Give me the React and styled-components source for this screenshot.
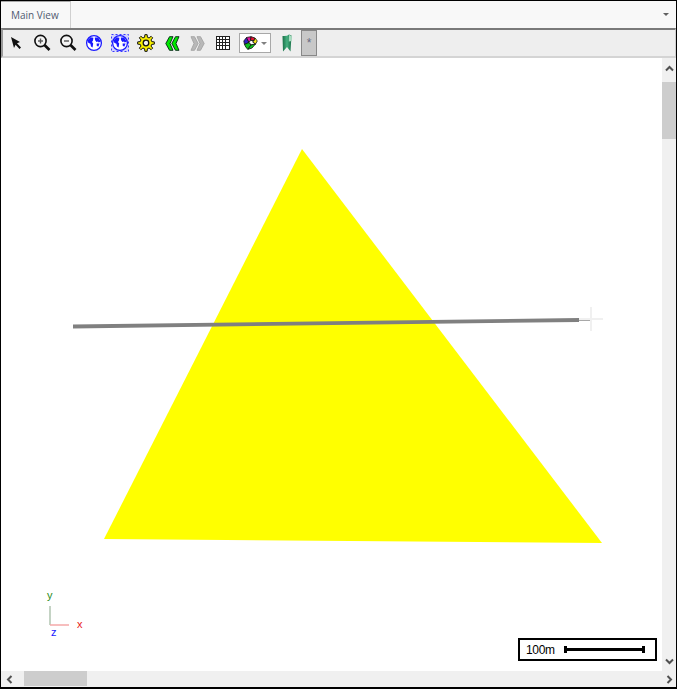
import React from "react";
import styled, { createGlobalStyle } from "styled-components";

const Global = createGlobalStyle`
  html, body { margin: 0; padding: 0; background: #fff; }
  body { font-family: "Liberation Sans", Arial, sans-serif; }
`;

const Frame = styled.div`
  box-sizing: border-box;
  width: 677px;
  height: 689px;
  border: 1px solid #000;
  border-bottom-width: 2px;
  display: flex;
  flex-direction: column;
  background: #fff;
  overflow: hidden;
`;

const TabStrip = styled.div`
  height: 27px;
  flex: none;
  background: #f8f8f8;
  display: flex;
  justify-content: space-between;
  align-items: stretch;
`;

const Tab = styled.div`
  box-sizing: border-box;
  width: 70px;
  border-right: 1px solid #d0d0d0;
  border-top: 1px solid #a8a8a8;
  background: #f8f8f8;
  color: #505a70;
  font-family: "Open Sans", sans-serif;
  font-size: 10px;
  line-height: 26px;
  padding-left: 10px;
  white-space: nowrap;
`;

const TabMenu = styled.div`
  width: 0;
  height: 0;
  margin: 12px 7px 0 0;
  border-left: 3px solid transparent;
  border-right: 3px solid transparent;
  border-top: 3px solid #606060;
`;

const Toolbar = styled.div`
  box-sizing: border-box;
  height: 30px;
  flex: none;
  background: #eeeeee;
  border-top: 2px solid #7a7a7a;
  border-left: 2px solid #9a9a9a;
  border-right: 1px solid #d0d0d0;
  border-bottom: 2px solid #d4d4d4;
  display: flex;
  align-items: center;
`;

const ToolIcon = styled.div`
  width: ${(p) => p.$w || 26}px;
  height: 26px;
  margin-left: ${(p) => p.$ml || 0}px;
  flex: none;
  display: flex;
  align-items: center;
  justify-content: center;
`;

const PaletteButton = styled.div`
  box-sizing: border-box;
  width: 32px;
  height: 20px;
  margin-left: 4px;
  background: #fff;
  border: 1px solid #a8a8a8;
  display: flex;
  align-items: center;
  gap: 3px;
  padding-left: 3px;
`;

const Caret = styled.div`
  width: 0;
  height: 0;
  border-left: 3px solid transparent;
  border-right: 3px solid transparent;
  border-top: 3px solid #808080;
`;

const Overflow = styled.div`
  box-sizing: border-box;
  width: 16px;
  height: 26px;
  margin-left: 1px;
  background: #c8c8c8;
  border: 1px solid #888;
  color: #6a6a80;
  font-size: 12px;
  text-align: center;
  line-height: 25px;
`;

const Body = styled.div`
  flex: 1;
  min-height: 0;
  display: grid;
  grid-template-columns: 1fr 14px;
  grid-template-rows: 1fr 16px;
`;

const Canvas = styled.div`
  position: relative;
  overflow: hidden;
  background: #fff;
`;

const Scene = styled.svg`
  display: block;
  position: absolute;
  inset: 0;
`;

const AxisLabel = styled.span`
  position: absolute;
  left: ${(p) => p.$x}px;
  top: ${(p) => p.$y}px;
  color: ${(p) => p.$color};
  font-size: 11px;
  line-height: 11px;
`;

const ScaleBox = styled.div`
  position: absolute;
  left: 517px;
  top: 580px;
  box-sizing: border-box;
  width: 139px;
  height: 23px;
  border: 2px solid #000;
  background: #fff;
  display: flex;
  align-items: center;
  padding-left: 6px;
  font-size: 12px;
  letter-spacing: -0.3px;
  color: #000;
`;

const ScaleBar = styled.div`
  position: relative;
  width: 81px;
  height: 3px;
  margin-left: 9px;
  background: #000;
  &::before, &::after {
    content: "";
    position: absolute;
    top: -2px;
    width: 3px;
    height: 7px;
    background: #000;
  }
  &::before { left: 0; }
  &::after { right: 0; }
`;

const VScroll = styled.div`
  background: #f0f0f0;
  display: flex;
  flex-direction: column;
  align-items: center;
`;

const HScroll = styled.div`
  background: #f0f0f0;
  display: flex;
  align-items: center;
`;

const Corner = styled.div`
  background: #f0f0f0;
`;

const Arrow = styled.div`
  flex: none;
  display: flex;
  align-items: center;
  justify-content: center;
  width: ${(p) => p.$w}px;
  height: ${(p) => p.$h}px;
`;

const VThumb = styled.div`
  width: 14px;
  height: 57px;
  margin-top: 4px;
  background: #cdcdcd;
`;

const HThumb = styled.div`
  height: 15px;
  width: 63px;
  align-self: flex-start;
  margin-left: 6px;
  background: #cdcdcd;
`;

const Spacer = styled.div`
  flex: 1;
`;

const Chev = ({ d }) => (
  <svg width="9" height="9" viewBox="0 0 9 9" fill="none">
    <path d={d} stroke="#505050" strokeWidth="2" />
  </svg>
);

const Globe = ({ box }) => (
  <svg width="18" height="18" viewBox="0 0 18 18">
    {box && <rect x="0.5" y="0.5" width="17" height="17" fill="#d0d0ff" stroke="#3a3aff" strokeDasharray="2 2" />}
    <circle cx="9" cy="9" r="7.4" fill="#fff" stroke="#1a1aff" strokeWidth="1.3" />
    <path d="M2.8 6 L5.5 3.2 L8.4 3.8 L8 6.5 L7 8 L8.2 9.5 L7.6 13.5 L6 12.5 L5.4 9.8 L3.2 8.8 Z" fill="#1a1aff" />
    <path d="M9.8 3.4 L13.2 3.6 L15.6 7.6 L13.8 8.6 L13 7.4 L11.4 8 L10 6 Z M11.6 9.6 L14.6 9.6 L13.4 12.6 L11.8 12 Z" fill="#1a1aff" />
  </svg>
);

const Magnifier = ({ plus }) => (
  <svg width="18" height="18" viewBox="0 0 18 18" fill="none">
    <circle cx="7.5" cy="7" r="5.6" stroke="#111" strokeWidth="1.6" fill="#f4f4f4" />
    <path d="M11.5 11 L16.5 16" stroke="#111" strokeWidth="2.6" />
    <path d="M5 7 H10" stroke="#555" strokeWidth="1.4" />
    {plus && <path d="M7.5 4.5 V9.5" stroke="#555" strokeWidth="1.4" />}
  </svg>
);

const gearPath = (() => {
  const pts = [];
  const n = 8;
  for (let i = 0; i < n; i++) {
    const a = (i / n) * Math.PI * 2 - Math.PI / 2;
    const step = (Math.PI * 2) / n;
    [
      [a - step * 0.3, 5.9],
      [a - step * 0.17, 8.4],
      [a + step * 0.17, 8.4],
      [a + step * 0.3, 5.9],
    ].forEach(([t, r]) => {
      pts.push(`${(9 + r * Math.cos(t)).toFixed(2)} ${(9 + r * Math.sin(t)).toFixed(2)}`);
    });
  }
  return `M${pts.join(" L")} Z`;
})();

const Gear = () => (
  <svg width="18" height="18" viewBox="0 0 18 18">
    <path d={gearPath} fill="#f8f000" stroke="#111" strokeWidth="1" strokeLinejoin="round" />
    <circle cx="9" cy="9" r="2.8" fill="#f0f0f0" stroke="#111" strokeWidth="1.3" />
  </svg>
);

const DoubleChevron = ({ dir, fill, stroke }) => (
  <svg width="15" height="15" viewBox="0 0 15 15">
    <g transform={dir === "left" ? "" : "translate(15 0) scale(-1 1)"} fill={fill} stroke={stroke} strokeWidth="0.9">
      <path d="M4.5 0.7 H8 L5 7.5 L8 14.3 H4.5 L0.8 7.5 Z" />
      <path d="M10.5 0.7 H14 L11 7.5 L14 14.3 H10.5 L6.8 7.5 Z" />
    </g>
  </svg>
);

const GridIcon = () => (
  <svg width="14" height="14" viewBox="0 0 14 14" fill="none" stroke="#222" strokeWidth="1">
    <rect x="0.5" y="0.5" width="13" height="13" fill="#fff" />
    <path d="M3.5 0V14M6.5 0V14M9.5 0V14M0 3.5H14M0 6.5H14M0 9.5H14" />
  </svg>
);

const PaletteIcon = () => (
  <svg width="15" height="14" viewBox="0 0 15 14" stroke="#111" strokeWidth="0.8">
    <path d="M3.5 1.5 L0.8 5 L1.5 8.5 L6 6.5 Z" fill="#3020c0" />
    <path d="M3.5 1.5 L8 0.7 L7.5 4.5 L6 6.5 Z" fill="#e010a0" />
    <path d="M8 0.7 L12 2 L11 4.5 L7.5 4.5 Z" fill="#e81030" />
    <path d="M12 2 L14.3 5 L12.5 8 L9.5 6 L11 4.5 Z" fill="#f8e818" />
    <path d="M6 6.5 L7.5 4.5 L11 4.5 L9.5 6 L12.5 8 L8 9 Z" fill="#ffffff" />
    <path d="M1.5 8.5 L6 6.5 L8 9 L5 13.3 L3 11.5 Z" fill="#10c020" />
    <path d="M8 9 L12.5 8 L9 12 L5 13.3 Z" fill="#10d020" />
  </svg>
);

const Ribbon = () => (
  <svg width="12" height="18" viewBox="0 0 12 18">
    <defs>
      <linearGradient id="ribbonFill" x1="0" x2="1" y1="0" y2="0">
        <stop offset="0" stopColor="#1a7048" />
        <stop offset="0.5" stopColor="#45b080" />
        <stop offset="1" stopColor="#1a7048" />
      </linearGradient>
    </defs>
    <path d="M1.5 2 Q6 2.5 8 0.5 L10.5 1.5 L9.5 17.5 L6 13 L2 17.5 Z" fill="url(#ribbonFill)" />
    <path d="M8 1 L7.8 7.5 L10.8 7 L10.7 2 Z" fill="#a8dcc0" />
  </svg>
);

const Cursor = () => (
  <svg width="14" height="14" viewBox="0 0 14 14">
    <path d="M2 1 L11 6 L8 7.3 L12 11.5 L10.5 13 L6.6 8.8 L5 12 Z" fill="#111" />
  </svg>
);

export default function App() {
  return (
    <>
      <Global />
      <Frame>
        <TabStrip>
          <Tab>Main View</Tab>
          <TabMenu />
        </TabStrip>
        <Toolbar>
          <ToolIcon><Cursor /></ToolIcon>
          <ToolIcon><Magnifier plus /></ToolIcon>
          <ToolIcon><Magnifier /></ToolIcon>
          <ToolIcon><Globe /></ToolIcon>
          <ToolIcon><Globe box /></ToolIcon>
          <ToolIcon><Gear /></ToolIcon>
          <ToolIcon><DoubleChevron dir="left" fill="#00e800" stroke="#021" /></ToolIcon>
          <ToolIcon $w={25}><DoubleChevron dir="right" fill="#b8b8b8" stroke="#a4a4a4" /></ToolIcon>
          <ToolIcon $w={25}><GridIcon /></ToolIcon>
          <PaletteButton><PaletteIcon /><Caret /></PaletteButton>
          <ToolIcon $ml={3}><Ribbon /></ToolIcon>
          <Overflow>*</Overflow>
        </Toolbar>
        <Body>
          <Canvas>
            <Scene width="661" height="613" viewBox="0 0 661 613">
              <polygon points="301,91 103,481 601,485" fill="#ffff00" />
              <line x1="72" y1="268.5" x2="578" y2="262" stroke="#808080" strokeWidth="3.8" />
              <path d="M578 262.5 H589" stroke="#a8a8a8" strokeWidth="1" fill="none" />
              <path d="M578 261 H602 M590 249 V273" stroke="#f0f0f0" strokeWidth="2" fill="none" />
              <path d="M49 548 V567" stroke="#b0c4b0" strokeWidth="1.5" fill="none" />
              <path d="M49 567 H68" stroke="#f4a8a8" strokeWidth="1.5" fill="none" />
            </Scene>
            <AxisLabel $x={46} $y={532} $color="#2a8a20">y</AxisLabel>
            <AxisLabel $x={76} $y={561} $color="#e82020">x</AxisLabel>
            <AxisLabel $x={50} $y={569} $color="#1a1aff">z</AxisLabel>
            <ScaleBox>
              100m
              <ScaleBar />
            </ScaleBox>
          </Canvas>
          <VScroll>
            <Arrow $w={14} $h={20}><Chev d="M1 6.5 L4.5 3 L8 6.5" /></Arrow>
            <VThumb />
            <Spacer />
            <Arrow $w={14} $h={20}><Chev d="M1 2.5 L4.5 6 L8 2.5" /></Arrow>
          </VScroll>
          <HScroll>
            <Arrow $w={17} $h={16}><Chev d="M6.5 1 L3 4.5 L6.5 8" /></Arrow>
            <HThumb />
            <Spacer />
          </HScroll>
          <Corner>
            <Arrow $w={14} $h={16}><Chev d="M2.5 1 L6 4.5 L2.5 8" /></Arrow>
          </Corner>
        </Body>
      </Frame>
    </>
  );
}
